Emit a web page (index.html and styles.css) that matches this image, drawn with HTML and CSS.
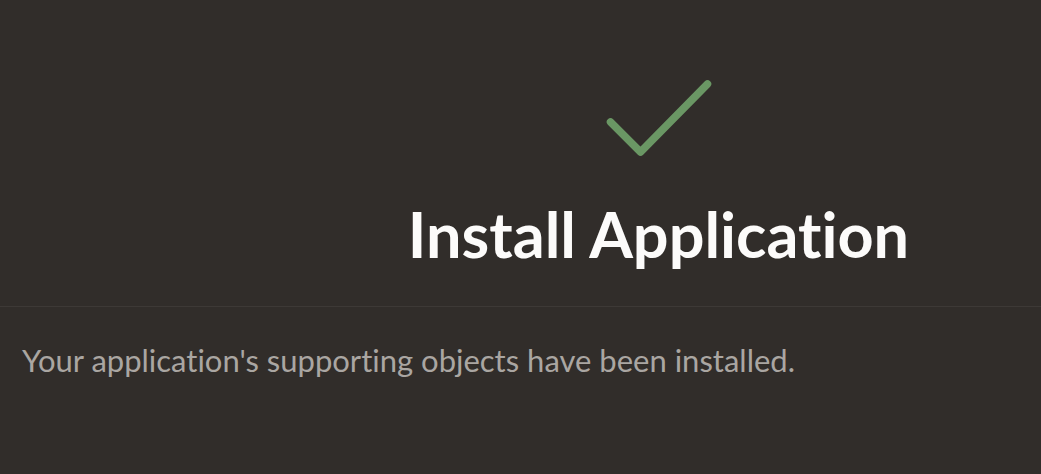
FILE: index.html
```html
<!DOCTYPE html>
<html>
<head>
<meta charset="utf-8">
<link rel="stylesheet" href="styles.css">
</head>
<body>
<div class="page">
  <header class="hero">
    <div class="hero-spacer"></div>
    <div class="hero-main">
      <svg class="check" width="110" height="80" viewBox="0 0 110 80">
        <polyline points="6.5,44 36.5,74 103.5,6" fill="none" stroke="#6a9764" stroke-width="7.5" stroke-linecap="round" stroke-linejoin="round"/>
      </svg>
      <h1 class="title">Install Application</h1>
    </div>
  </header>
  <section class="body">
    <p class="message">Your application's supporting objects have been installed.</p>
  </section>
</div>
</body>
</html>
```
FILE: styles.css
```css
html, body {
  margin: 0;
  padding: 0;
  background: #312d2a;
  height: 100%;
}
.page {
  font-family: "Lato", "Noto Sans", sans-serif;
  font-variant-ligatures: none;
  color: #ffffff;
}
.hero {
  display: grid;
  grid-template-columns: 276px 1fr;
  border-bottom: 1px solid #3d3936;
  height: 306px;
}
.hero-main {
  display: flex;
  flex-direction: column;
  align-items: center;
  padding-top: 78px;
}
.check {
  display: block;
}
.title {
  margin: 38px 0 0 0;
  font-size: 63px;
  font-weight: 700;
  line-height: 76px;
  color: #fcfbfa;
}
.body {
  padding: 0 22px;
}
.message {
  margin: 33px 0 0 0;
  font-size: 31px;
  line-height: 40px;
  font-weight: 400;
  color: #aaa6a2;
}
```
